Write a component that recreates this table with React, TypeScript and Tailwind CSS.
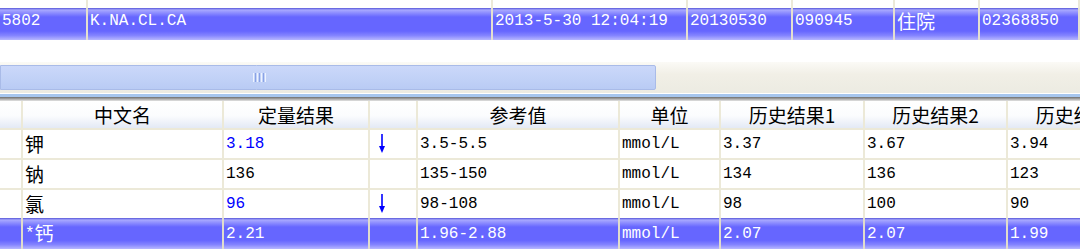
import React from 'react';

const mono = "font-['Liberation_Mono','Noto_Sans_CJK_SC',monospace] text-[16px]";
const cjk = "font-['Noto_Sans_CJK_SC',sans-serif] text-[19px]";
const blueBand =
  'bg-[linear-gradient(to_bottom,#5656d8_0px,#a8a8ff_2px,#8c8cff_5px,#6666ff_9px,#6666ff_72%,#8484ff_86%,#b8b8ff_100%)]';

const topCols = 'grid-cols-[88px_405px_195px_105px_102px_85px_100px]';
const gridCols = 'grid-cols-[23px_201px_146px_48px_202px_101px_144px_143px_144px]';

type Cell = { text: string; cjk?: boolean; blue?: boolean; arrow?: boolean };

const topRow: Cell[] = [
  { text: '5802' },
  { text: 'K.NA.CL.CA' },
  { text: '2013-5-30 12:04:19' },
  { text: '20130530' },
  { text: '090945' },
  { text: '住院', cjk: true },
  { text: '02368850' },
];

const headers = ['', '中文名', '定量结果', '', '参考值', '单位', '历史结果1', '历史结果2', '历史结果3'];

const rows: Cell[][] = [
  [
    { text: '' },
    { text: '钾', cjk: true },
    { text: '3.18', blue: true },
    { text: '', arrow: true },
    { text: '3.5-5.5' },
    { text: 'mmol/L' },
    { text: '3.37' },
    { text: '3.67' },
    { text: '3.94' },
  ],
  [
    { text: '' },
    { text: '钠', cjk: true },
    { text: '136' },
    { text: '' },
    { text: '135-150' },
    { text: 'mmol/L' },
    { text: '134' },
    { text: '136' },
    { text: '123' },
  ],
  [
    { text: '' },
    { text: '氯', cjk: true },
    { text: '96', blue: true },
    { text: '', arrow: true },
    { text: '98-108' },
    { text: 'mmol/L' },
    { text: '98' },
    { text: '100' },
    { text: '90' },
  ],
];

const selected = ['', '*钙', '2.21', '', '1.96-2.88', 'mmol/L', '2.07', '2.07', '1.99'];

const DownArrow = () => (
  <svg width="8" height="20" viewBox="0 0 8 20" className="ml-[6px]">
    <line x1="4" y1="0" x2="4" y2="15" stroke="#0000ff" strokeWidth="1.6" />
    <polygon points="1,12 7,12 4,19" fill="#0000ff" />
  </svg>
);

const App: React.FC = () => {
  return (
    <div className="w-[1080px] h-[249px] overflow-hidden bg-white select-none">
      {/* upper grid, only the selected record visible */}
      <div className={`grid ${topCols} h-[8px]`}>
        {topRow.map((_, i) => (
          <div key={i} className="border-r-2 border-[#ece9d8]" />
        ))}
      </div>
      <div className={`grid ${topCols} h-[32px] ${blueBand} text-white`}>
        {topRow.map((c, i) => (
          <div
            key={i}
            className={`pt-[1px] pl-[2px] leading-[24px] border-r-2 border-[#e4e0d0] whitespace-nowrap ${
              c.cjk ? cjk : mono
            }`}
          >
            {c.text}
          </div>
        ))}
      </div>

      <div className="h-[22px]" />

      {/* horizontal scrollbar */}
      <div className="h-[31px] flex bg-[linear-gradient(to_bottom,#fbfaf6,#f1efe6_40%,#ecebe2)]">
        <div className="w-[656px] my-[3px] rounded-r-[2px] border border-[#a9bbe8] bg-[linear-gradient(to_bottom,#cbd8fa,#c2d2f7_50%,#b9cbf4)] flex items-center justify-center">
          <div className="flex gap-[1px] -translate-x-[69px]">
            {[0, 1, 2, 3, 4, 5, 6].map((i) => (
              <div key={i} className={`w-[1px] h-[9px] ${i % 2 ? 'bg-[#8aa3e6]' : 'bg-[#eef3ff]'}`} />
            ))}
          </div>
        </div>
      </div>
      <div className="h-[1px] bg-white" />
      <div className="h-[3px] bg-[#a6c6ee]" />
      <div className="h-[4px] bg-[linear-gradient(to_bottom,#6e6e6e,#b4b4b4_60%,#e4e4e4)]" />

      {/* lower grid */}
      <div className={`grid ${gridCols} h-[27px] bg-[linear-gradient(to_bottom,#ffffff,#fbfcfe_55%,#e3e9f5)]`}>
        {headers.map((h, i) => (
          <div
            key={i}
            className={`flex items-center justify-center border-r-2 border-[#ece9d8] text-black whitespace-nowrap ${cjk}`}
          >
            {h}
          </div>
        ))}
      </div>

      {rows.map((r, ri) => (
        <div key={ri} className={`grid ${gridCols} h-[30px] border-t-2 border-[#ece9d8]`}>
          {r.map((c, ci) => (
            <div
              key={ci}
              className={`flex items-center pl-[2px] border-r-2 border-[#ece9d8] whitespace-nowrap ${
                c.cjk ? cjk : mono
              } ${c.blue ? 'text-[#0000ff]' : 'text-black'}`}
            >
              {c.arrow ? <DownArrow /> : c.text}
            </div>
          ))}
        </div>
      ))}

      <div className={`grid ${gridCols} h-[31px] ${blueBand} text-white`}>
        {selected.map((t, i) => (
          <div key={i} className={`flex items-center pl-[2px] border-r-2 border-[#e0dccc] whitespace-nowrap ${mono}`}>
            {t.startsWith('*') ? (
              <>
                <span>*</span>
                <span className={cjk}>{t.slice(1)}</span>
              </>
            ) : (
              t
            )}
          </div>
        ))}
      </div>
    </div>
  );
};

export default App;
